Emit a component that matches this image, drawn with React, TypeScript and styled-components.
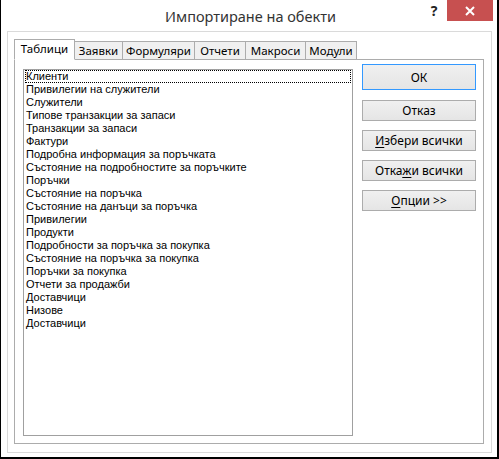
import React from 'react';
import styled, { createGlobalStyle } from 'styled-components';

const GlobalStyle = createGlobalStyle`
  html, body {
    margin: 0;
    padding: 0;
    background: #ffffff;
  }
`;

const Window = styled.div`
  box-sizing: border-box;
  width: 499px;
  height: 459px;
  background: #ffffff;
  border-left: 1px solid #000;
  border-right: 2px solid #000;
  border-bottom: 2px solid #000;
  display: flex;
  flex-direction: column;
`;

const TitleBar = styled.div`
  height: 31px;
  display: flex;
  align-items: flex-start;
  font-family: 'Noto Sans', 'Open Sans', sans-serif;
`;

// left padding balances the help + close buttons so the title centres on the window
const Title = styled.div`
  flex: 1;
  text-align: center;
  font-size: 14.5px;
  color: #333;
  line-height: 20px;
  padding-top: 6px;
  padding-left: 73px;
`;

const HelpMark = styled.div`
  width: 14px;
  font-size: 14px;
  font-weight: 700;
  color: #222;
  line-height: 14px;
  padding-top: 4px;
  margin-right: 6px;
  text-align: center;
`;

const CloseButton = styled.div`
  width: 46px;
  height: 21px;
  background: #c75050;
  margin-right: 4px;
  display: flex;
  align-items: center;
  justify-content: center;
`;

const Frame = styled.div`
  box-sizing: border-box;
  margin-left: 6px;
  width: 485px;
  height: 422px;
  border: 1px solid #dadada;
  padding: 7px 7px 8px 6px;
  display: flex;
  flex-direction: column;
`;

const TabRow = styled.div`
  display: flex;
  align-items: flex-end;
  height: 21px;
  margin-bottom: -1px;
`;

const Tab = styled.div<{ $active?: boolean; $w: number }>`
  box-sizing: border-box;
  width: ${({ $w }) => $w}px;
  height: ${({ $active }) => ($active ? 21 : 19)}px;
  margin-left: -1px;
  &:first-child {
    margin-left: 0;
  }
  border: 1px solid #acacac;
  border-bottom: ${({ $active }) => ($active ? '1px solid #fff' : '1px solid #acacac')};
  background: ${({ $active }) => ($active ? '#fff' : '#f0f0f0')};
  position: relative;
  z-index: ${({ $active }) => ($active ? 2 : 1)};
  font-family: 'Noto Sans', 'Open Sans', sans-serif;
  font-size: 11.5px;
  color: #000;
  display: flex;
  align-items: center;
  justify-content: center;
  padding-bottom: ${({ $active }) => ($active ? 2 : 0)}px;
`;

const Panel = styled.div`
  box-sizing: border-box;
  width: 470px;
  height: 385px;
  border: 1px solid #acacac;
  background: #fff;
  padding: 4px 7px 7px 8px;
  display: flex;
  gap: 9px;
  align-items: flex-start;
`;

const ListBox = styled.div`
  box-sizing: border-box;
  margin-top: 5px;
  width: 330px;
  height: 367px;
  border: 1px solid #a0a0a0;
  padding: 0 1px;
  font-family: 'Liberation Sans', Arial, sans-serif;
  font-size: 11px;
  color: #000;
`;

const ListItem = styled.div<{ $focused?: boolean }>`
  box-sizing: border-box;
  height: 13px;
  line-height: 11px;
  padding-left: 0;
  white-space: nowrap;
  border: 1px dotted ${({ $focused }) => ($focused ? '#000' : 'transparent')};
`;

const ButtonColumn = styled.div`
  display: flex;
  flex-direction: column;
  gap: 9px;
`;

const Button = styled.div<{ $default?: boolean }>`
  box-sizing: border-box;
  width: 114px;
  height: ${({ $default }) => ($default ? 26 : 21)}px;
  margin-bottom: ${({ $default }) => ($default ? 1 : 0)}px;
  border: 1px solid ${({ $default }) => ($default ? '#3399ff' : '#acacac')};
  background: linear-gradient(#f0f0f0, #e5e5e5);
  font-family: 'Noto Sans', 'Open Sans', sans-serif;
  font-size: 12px;
  color: #000;
  display: flex;
  align-items: center;
  justify-content: center;
  u {
    text-decoration: underline;
    text-underline-offset: 2px;
  }
`;

const tabs = [
  { label: 'Таблици', w: 61, active: true },
  { label: 'Заявки', w: 49 },
  { label: 'Формуляри', w: 73 },
  { label: 'Отчети', w: 52 },
  { label: 'Макроси', w: 61 },
  { label: 'Модули', w: 52 },
];

const items = [
  'Клиенти',
  'Привилегии на служители',
  'Служители',
  'Типове транзакции за запаси',
  'Транзакции за запаси',
  'Фактури',
  'Подробна информация за поръчката',
  'Състояние на подробностите за поръчките',
  'Поръчки',
  'Състояние на поръчка',
  'Състояние на данъци за поръчка',
  'Привилегии',
  'Продукти',
  'Подробности за поръчка за покупка',
  'Състояние на поръчка за покупка',
  'Поръчки за покупка',
  'Отчети за продажби',
  'Доставчици',
  'Низове',
  'Доставчици',
];

export default function App() {
  return (
    <>
      <GlobalStyle />
      <Window>
        <TitleBar>
          <Title>Импортиране на обекти</Title>
          <HelpMark>?</HelpMark>
          <CloseButton>
            <svg width="10" height="10" viewBox="0 0 10 10">
              <path d="M1 1 L9 9 M9 1 L1 9" stroke="#fff" strokeWidth="2" />
            </svg>
          </CloseButton>
        </TitleBar>
        <Frame>
          <TabRow>
            {tabs.map((t) => (
              <Tab key={t.label} $w={t.w} $active={t.active}>
                {t.label}
              </Tab>
            ))}
          </TabRow>
          <Panel>
            <ListBox>
              {items.map((name, i) => (
                <ListItem key={i} $focused={i === 0}>
                  {name}
                </ListItem>
              ))}
            </ListBox>
            <ButtonColumn>
              <Button $default>ОК</Button>
              <Button>Отказ</Button>
              <Button>
                <span><u>И</u>збери всички</span>
              </Button>
              <Button>
                <span>Отка<u>ж</u>и всички</span>
              </Button>
              <Button>
                <span><u>О</u>пции &gt;&gt;</span>
              </Button>
            </ButtonColumn>
          </Panel>
        </Frame>
      </Window>
    </>
  );
}
